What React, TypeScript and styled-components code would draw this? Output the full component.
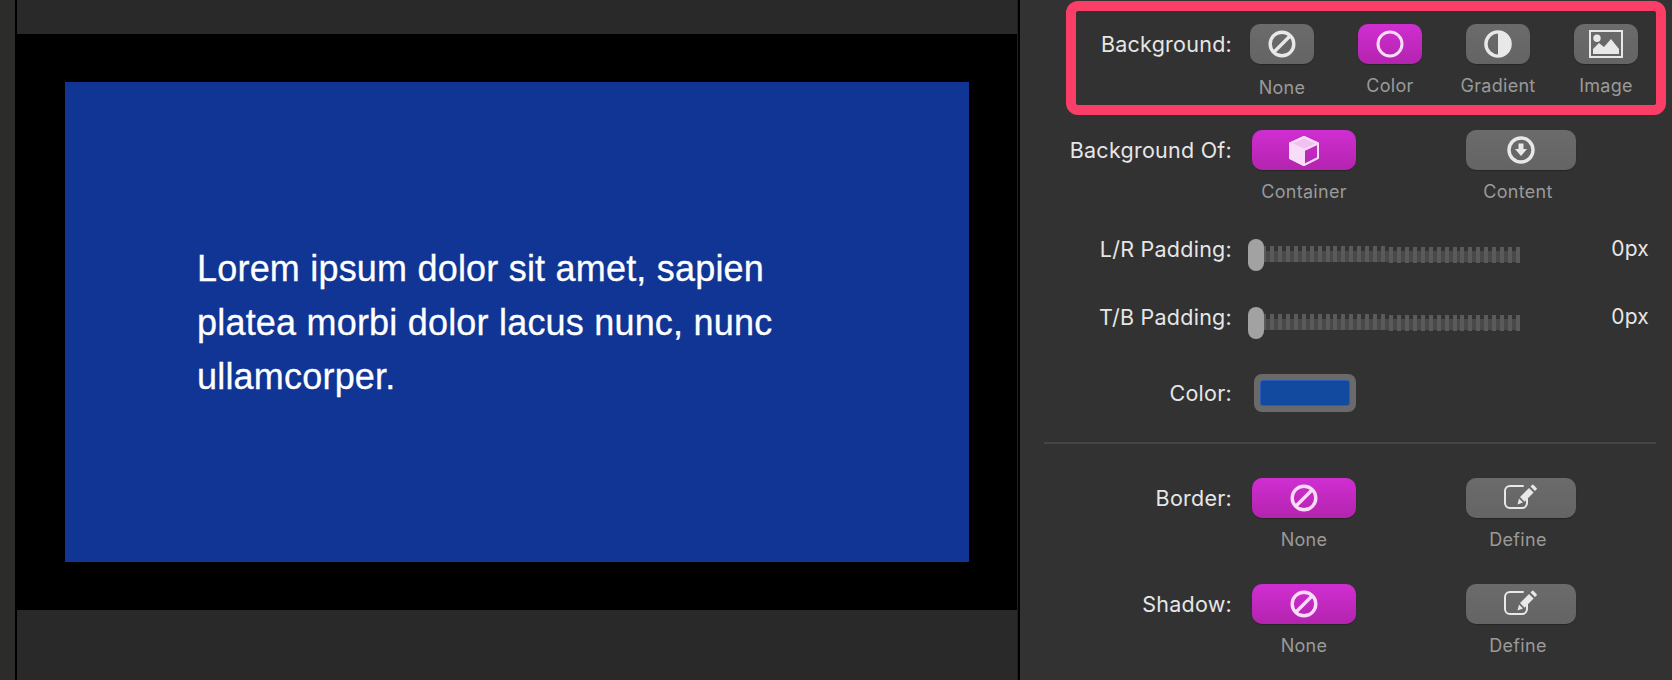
import React from "react";
import styled, { createGlobalStyle } from "styled-components";

const Global = createGlobalStyle`
  html, body { margin: 0; padding: 0; background: #000; }
  #root { width: 1672px; height: 680px; overflow: hidden; }
`;

const Shell = styled.div`
  display: flex;
  width: 1672px;
  height: 680px;
  background: #000;
  font-family: Inter, "Liberation Sans", sans-serif;
`;
const Strip = styled.div`
  width: 15px;
  margin-right: 2px;
  background: #2c2c2a;
`;
const Workspace = styled.main`
  width: 1000px;
  display: flex;
  flex-direction: column;
`;
const Bar = styled.div<{ $h: number }>`
  height: ${(p) => p.$h}px;
  background: #292929;
`;
const Stage = styled.div`
  height: 576px;
  box-sizing: border-box;
  padding: 48px;
  background: #000;
`;
const Hero = styled.div`
  height: 480px;
  box-sizing: border-box;
  padding: 2px 0 0 132px;
  display: flex;
  align-items: center;
  background: #103594;
`;
const HeroText = styled.p`
  margin: 0;
  width: 600px;
  color: #fff;
  font: 400 36px/54px "Liberation Sans", Arial, sans-serif;
  letter-spacing: 0.2px;
  -webkit-text-stroke: 0.3px #fff;
`;
const Seam = styled.div`
  width: 3px;
  box-sizing: border-box;
  border-left: 1px solid #1f1f1f;
`;
const Panel = styled.aside`
  flex: 1;
  box-sizing: border-box;
  padding-top: 1px;
  background: #323232;
`;
const Highlight = styled.section`
  width: 600px;
  height: 114px;
  box-sizing: border-box;
  margin-left: 46px;
  padding-top: 13px;
  border: 10px solid #fb3e68;
  border-radius: 12px;
  display: flex;
  align-items: flex-start;
`;
const Row = styled.div<{ $top: number }>`
  display: flex;
  align-items: flex-start;
  margin-top: ${(p) => p.$top}px;
`;
const FieldLabel = styled.div<{ $w: number; $h?: number }>`
  width: ${(p) => p.$w}px;
  height: ${(p) => p.$h ?? 40}px;
  flex: none;
  display: flex;
  align-items: center;
  justify-content: flex-end;
  color: #e6e6e6;
  font-size: 21.5px;
  letter-spacing: 0.25px;
  white-space: nowrap;
`;
const Options = styled.div<{ $left: number; $gap: number }>`
  display: flex;
  margin-left: ${(p) => p.$left}px;
  gap: ${(p) => p.$gap}px;
`;
const Option = styled.div<{ $w: number }>`
  width: ${(p) => p.$w}px;
  display: flex;
  flex-direction: column;
  align-items: center;
`;
const Btn = styled.div<{ $w: number; $on?: boolean }>`
  width: ${(p) => p.$w}px;
  height: 40px;
  flex: none;
  align-self: flex-start;
  border-radius: 10px;
  display: flex;
  align-items: center;
  justify-content: center;
  color: ${(p) => (p.$on ? "#f8dcf8" : "#e8e8e8")};
  background: ${(p) =>
    p.$on
      ? "linear-gradient(180deg, #d02ed2 0%, #b324ae 100%)"
      : "linear-gradient(180deg, #6b6b6b 0%, #646464 100%)"};
  box-shadow: 0 1px 1px rgba(0, 0, 0, 0.25);
`;
const Caption = styled.div<{ $drop?: number }>`
  margin-top: ${(p) => 12 + (p.$drop ?? 0)}px;
  color: #9a9a9a;
  font-size: 18px;
  line-height: 20px;
  letter-spacing: 0.3px;
  white-space: nowrap;
`;
const Slider = styled.div`
  position: relative;
  width: 272px;
  height: 32px;
  flex: none;
  margin-left: 16px;
`;
const Band = styled.div`
  position: absolute;
  left: 0;
  right: 0;
  top: 12px;
  height: 11px;
  background: #494949;
`;
const Ticks = styled.div`
  position: absolute;
  left: 14px;
  right: 0;
  top: 7px;
  display: flex;
  justify-content: space-between;
`;
const Tick = styled.div<{ $low: boolean }>`
  width: 4px;
  height: 16px;
  margin-top: ${(p) => (p.$low ? 1 : 0)}px;
  background: #5a5a5a;
`;
const Thumb = styled.div`
  position: absolute;
  left: 0;
  top: 0;
  width: 16px;
  height: 32px;
  border-radius: 8px;
  background: #a2a2a2;
`;
const Value = styled.div`
  margin-left: auto;
  margin-right: 23px;
  color: #e6e6e6;
  font-size: 21px;
  line-height: 20px;
  letter-spacing: 0.25px;
`;
const Swatch = styled.div`
  width: 102px;
  height: 38px;
  box-sizing: border-box;
  margin-left: 22px;
  padding: 6px;
  border-radius: 8px;
  background: #6a6a6a;
`;
const SwatchFill = styled.div`
  height: 100%;
  box-sizing: border-box;
  border: 1px solid #2a5cb4;
  border-radius: 3px;
  background: #124aa0;
`;
const Rule = styled.hr`
  width: 612px;
  height: 2px;
  border: 0;
  margin: 30px 0 0 24px;
  background: #454545;
`;

const Svg = styled.svg`
  display: block;
  flex: none;
`;

const NoneIcon = () => (
  <Svg width="28" height="28" viewBox="0 0 28 28" fill="none" stroke="currentColor" strokeWidth="3.4">
    <circle cx="14" cy="14" r="11.8" />
    <path d="M6 22 22 6" />
  </Svg>
);
const RingIcon = () => (
  <Svg width="28" height="28" viewBox="0 0 28 28" fill="none" stroke="currentColor" strokeWidth="3">
    <circle cx="14" cy="14" r="12" />
  </Svg>
);
const HalfIcon = () => (
  <Svg width="28" height="28" viewBox="0 0 28 28" fill="currentColor">
    <path fillRule="evenodd" d="M14 .2a13.8 13.8 0 1 1 0 27.6A13.8 13.8 0 0 1 14 .2Zm0 3.4a10.4 10.4 0 0 0 0 20.8Z" />
  </Svg>
);
const ImageIcon = () => (
  <Svg width="34" height="28" viewBox="0 0 34 28" fill="none">
    <rect x="1" y="1" width="32" height="26" stroke="currentColor" strokeWidth="2" />
    <circle cx="8" cy="8.2" r="3.7" fill="currentColor" />
    <path d="M4 24v-5l6-6 5 4 7-8 8 10v5Z" fill="currentColor" />
  </Svg>
);
const CubeIcon = () => (
  <Svg width="30" height="32" viewBox="0 0 30 32" fill="none" stroke="currentColor" strokeWidth="2" strokeLinejoin="round">
    <path d="M15 3 29 9.500V24l-14 7L1 24V9.500Z" />
    <path d="M1 9.500 15 16v15L1 24Z" fill="currentColor" />
    <path d="M1 9.500 15 3l14 6.500L15 16Z" fill="currentColor" fillOpacity="0.85" />
  </Svg>
);
const DownIcon = () => (
  <Svg width="28" height="28" viewBox="0 0 28 28" fill="none">
    <circle cx="14" cy="14" r="12" stroke="currentColor" strokeWidth="3.4" />
    <path d="M11.5 7.5h5V13H20l-6 7-6-7h3.5Z" fill="currentColor" />
  </Svg>
);
const EditIcon = () => (
  <Svg width="34" height="28" viewBox="0 0 34 28" fill="none">
    <path
      d="M19 2H6A5 5 0 0 0 1 7v12a5 5 0 0 0 5 5h12a5 5 0 0 0 5-5v-6"
      stroke="currentColor"
      strokeWidth="2"
      strokeLinecap="round"
    />
    <path
      d="M26.500 2.500 28 1q.8-.8 1.600 0L32.500 3.900q.8.8 0 1.600L31 7ZM25 4 29.600 8.600 20.500 17.700 16 13.100ZM15 14.500 19 18.500 13.500 20.500Z"
      fill="currentColor"
    />
  </Svg>
);

const Choice = ({
  w,
  bw,
  on,
  icon,
  text,
  drop,
}: {
  w: number;
  bw?: number;
  on?: boolean;
  icon: React.ReactNode;
  text: string;
  drop?: number;
}) => (
  <Option $w={w}>
    <Btn $w={bw ?? w} $on={on}>
      {icon}
    </Btn>
    <Caption $drop={drop}>{text}</Caption>
  </Option>
);

const SliderRow = ({ top, label }: { top: number; label: string }) => (
  <Row $top={top}>
    <FieldLabel $w={212} $h={20}>
      {label}
    </FieldLabel>
    <Slider>
      <Band />
      <Ticks>
        {Array.from({ length: 33 }, (_, i) => (
          <Tick key={i} $low={i >= 16} />
        ))}
      </Ticks>
      <Thumb />
    </Slider>
    <Value>0px</Value>
  </Row>
);

const PairRow = ({
  top,
  label,
  firstIcon,
  firstText,
  secondIcon,
  secondText,
}: {
  top: number;
  label: string;
  firstIcon: React.ReactNode;
  firstText: string;
  secondIcon: React.ReactNode;
  secondText: string;
}) => (
  <Row $top={top}>
    <FieldLabel $w={212}>{label}</FieldLabel>
    <Options $left={20} $gap={110}>
      <Choice w={104} on icon={firstIcon} text={firstText} />
      <Choice w={104} bw={110} icon={secondIcon} text={secondText} />
    </Options>
  </Row>
);

export default function App() {
  return (
    <Shell>
      <Global />
      <Strip />
      <Workspace>
        <Bar $h={34} />
        <Stage>
          <Hero>
            <HeroText>
              Lorem ipsum dolor sit amet, sapien platea morbi dolor lacus nunc, nunc ullamcorper.
            </HeroText>
          </Hero>
        </Stage>
        <Bar $h={70} />
      </Workspace>
      <Seam />
      <Panel>
        <Highlight>
          <FieldLabel $w={156}>Background:</FieldLabel>
          <Options $left={18} $gap={44}>
            <Choice w={64} icon={<NoneIcon />} text="None" drop={2} />
            <Choice w={64} on icon={<RingIcon />} text="Color" />
            <Choice w={64} icon={<HalfIcon />} text="Gradient" />
            <Choice w={64} icon={<ImageIcon />} text="Image" />
          </Options>
        </Highlight>
        <PairRow
          top={15}
          label="Background Of:"
          firstIcon={<CubeIcon />}
          firstText="Container"
          secondIcon={<DownIcon />}
          secondText="Content"
        />
        <SliderRow top={37} label="L/R Padding:" />
        <SliderRow top={36} label="T/B Padding:" />
        <Row $top={35}>
          <FieldLabel $w={212} $h={38}>
            Color:
          </FieldLabel>
          <Swatch>
            <SwatchFill />
          </Swatch>
        </Row>
        <Rule />
        <PairRow
          top={34}
          label="Border:"
          firstIcon={<NoneIcon />}
          firstText="None"
          secondIcon={<EditIcon />}
          secondText="Define"
        />
        <PairRow
          top={34}
          label="Shadow:"
          firstIcon={<NoneIcon />}
          firstText="None"
          secondIcon={<EditIcon />}
          secondText="Define"
        />
      </Panel>
    </Shell>
  );
}
